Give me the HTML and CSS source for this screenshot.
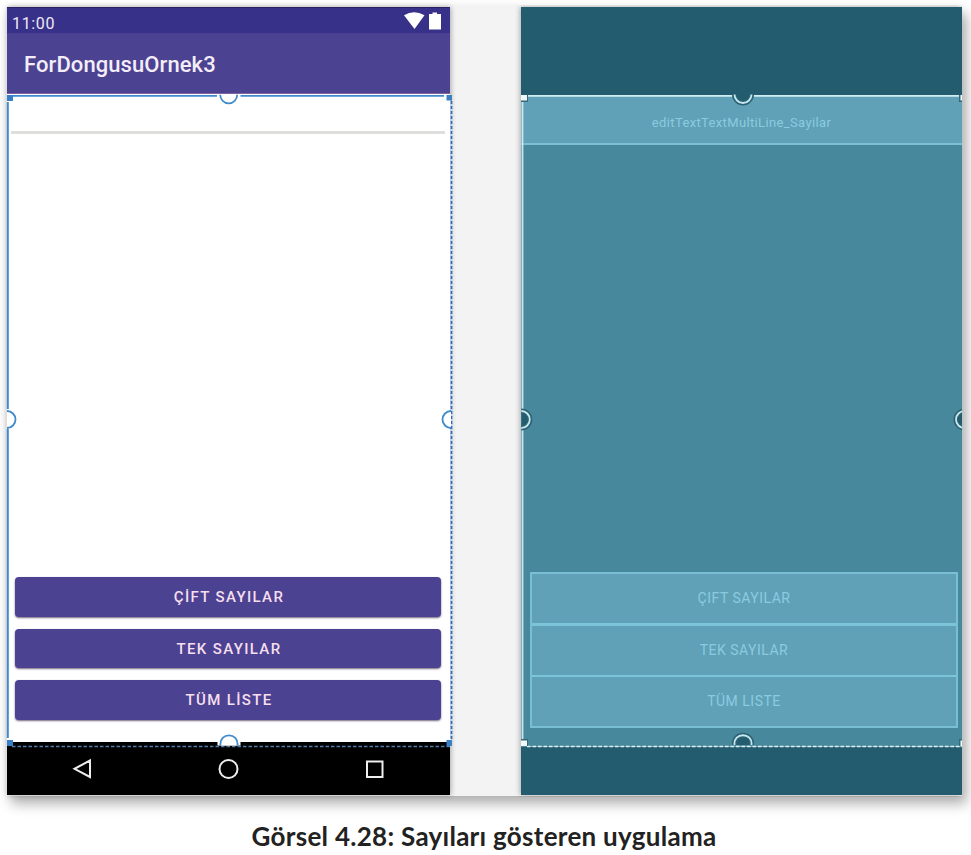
FILE: index.html
```
<!DOCTYPE html>
<html lang="tr">
<head>
<meta charset="utf-8">
<title>Görsel 4.28</title>
<link rel="stylesheet" href="styles.css">
</head>
<body>
<figure class="figure">
  <div class="editor">
    <section class="device design">
      <header class="status">
        <span class="clock">11:00</span>
        <svg class="status-icons" width="38" height="18" viewBox="0 0 38 18" fill="#fff"><path d="M0 3.200Q10 -2.800 20.500 3.200L10.500 17Z"/><path d="M28.500 .5h4.500v1.500h4V17.500h-12V2h3.500z"/></svg>
      </header>
      <div class="appbar">ForDongusuOrnek3</div>
      <main class="content">
        <div class="field"></div>
        <div class="buttons">
          <button class="btn">ÇİFT SAYILAR</button>
          <button class="btn">TEK SAYILAR</button>
          <button class="btn">TÜM LİSTE</button>
        </div>
      </main>
      <nav class="navbar">
        <svg width="443" height="53" fill="none" stroke="#eee" stroke-width="2"><path d="M83 18.500V35L67.500 26.800Z"/><circle cx="221.500" cy="27" r="9"/><path d="M360 19.500h15.500v15.500H360z"/></svg>
      </nav>
      <svg class="selection" width="446" height="656" fill="none" stroke="#3f8bcd" stroke-width="1.800">
        <path d="M5 1.800H210M233 1.800H437"/>
        <path d="M.8 8V315M.8 335V644" stroke-width="2"/>
        <path d="M444.500 7V646" stroke="#b8d8f3" stroke-width="2"/>
        <path d="M444.500 7V646" stroke="#4263ae" stroke-width="1.600" stroke-dasharray="3 2"/>
        <path d="M5 652.500H444" stroke="#527da8" stroke-width="1.400" stroke-dasharray="3.500 2"/>
        <g fill="#fff" stroke="none"><path d="M210.500 1h23v3h-23zM210.500 647h23v4.500h-23z"/></g>
        <path d="M213.200 .800A8.500 8.500 0 0 0 230.200 .800M213.500 651.500C212 638 232 638 230.500 651.500M0 317A8.500 8.500 0 0 1 0 334M444 317A8.500 8.500 0 0 0 444 334" fill="#fff"/>
        <path d="M0 648h8v-3H0zM436 648h8v-3h-8z" fill="#fff" stroke="none"/>
        <path d="M0 1h6v6H0zM439.500 1h5.500v5.500h-5.500zM0 646h6v6H0zM439.500 646h5.500v6h-5.500z" fill="#397fc5" stroke="none"/>
      </svg>
    </section>
    <section class="device blueprint">
      <div class="bp-top"></div>
      <main class="bp-content">
        <div class="bp-field">editTextTextMultiLine_Sayilar</div>
        <div class="bp-buttons">
          <div class="bp-btn">ÇIFT SAYILAR</div>
          <div class="bp-btn">TEK SAYILAR</div>
          <div class="bp-btn">TÜM LISTE</div>
        </div>
      </main>
      <div class="bp-bottom"></div>
      <svg class="selection" width="441" height="656" fill="none" stroke="#c7e8f0" stroke-width="1.800">
        <path d="M6 1.800H441" stroke="#d4edf2"/>
        <path d="M1.500 7V645"/>
        <g fill="#235c6f" stroke="#2b6374" stroke-width="5"><path d="M213.500 .5A8.500 8.500 0 0 0 230.500 .5M213.500 651C212 638 232 638 230.500 651M.3 317A8.500 8.500 0 0 1 .3 334M443.500 317A8.500 8.500 0 0 0 443.500 334"/></g>
        <path d="M213.500 .5A8.500 8.500 0 0 0 230.500 .5M213.500 651C212 638 232 638 230.500 651M.3 317A8.500 8.500 0 0 1 .3 334M443.500 317A8.500 8.500 0 0 0 443.500 334"/>
        <path d="M6 652.500H441" stroke="#7fabb6" stroke-width="1.200"/>
        <path d="M6 652.500H441" stroke="#e0f0f2" stroke-width="1.500" stroke-dasharray="3.500 2"/>
        <path d="M0 1h7v7H0zM438 1h3v7h-3zM0 645h7v7H0zM438 645h3v7h-3z" fill="#35687b" stroke="none"/>
        <path d="M0 1h6v5.500H0zM439.500 1h1.500v5.500h-1.500zM0 646.500h6v5.500H0zM439.500 646.500h1.500v5.500h-1.500z" fill="#f0f8fa" stroke="none"/>
      </svg>
    </section>
  </div>
  <figcaption class="caption">Görsel 4.28: Sayıları gösteren uygulama</figcaption>
</figure>
</body>
</html>
```
FILE: styles.css
```
* { box-sizing: border-box; }
body { margin: 0; background: #fff; overflow: hidden; }
.figure { margin: 0; padding: 6px 9px 0 6px; height: 855px; }
.editor {
  display: flex;
  justify-content: space-between;
  width: 956px;
  height: 790px;
  padding: 1px 0 1px 1px;
  background: #f3f3f3;
  box-shadow: 5px 8px 12px rgba(0, 0, 0, .3), 0 0 9px rgba(0, 0, 0, .05);
}
.device { position: relative; display: flex; flex-direction: column; height: 788px; }
.selection { position: absolute; left: 0; top: 87px; overflow: visible; }

.design { width: 443px; font-family: Roboto, sans-serif; box-shadow: 1px 0 5px rgba(0, 0, 0, .3); }
.status {
  display: flex;
  justify-content: space-between;
  height: 26px;
  padding: 4px 8px 0 5px;
  background: #38318a;
  border-top: 1px solid #292265;
  color: #eee8f4;
}
.clock { font-size: 16px; line-height: 23px; letter-spacing: .65px; }
.status-icons { display: block; }
.appbar {
  height: 61px;
  padding-left: 17px;
  background: #4b4292;
  border-bottom: 1px solid #80629f;
  color: #f4edf7;
  font-size: 22px;
  font-weight: 500;
  line-height: 63px;
  letter-spacing: .08px;
}
.content {
  display: flex;
  flex-direction: column;
  justify-content: space-between;
  height: 648px;
  padding: 0 9px 22px 8px;
  background: #fff;
}
.field { height: 40px; margin: 0 -4px; border-bottom: 3px solid #dededc; }
.buttons { display: flex; flex-direction: column; gap: 12px; }
.btn {
  height: 39.600px;
  padding: 0 0 0 2px;
  border: 0;
  border-radius: 4px;
  background: #4b4292;
  color: #f6dfed;
  font: 500 15px/41px Roboto, sans-serif;
  letter-spacing: 1.350px;
  box-shadow: 0 1px 2px rgba(45, 20, 60, .65);
}
.navbar { height: 53px; background: #000; }
.navbar svg { display: block; }

.blueprint {
  width: 441px;
  background: #235c6f;
  color: #8bcbdf;
  font-family: Roboto, sans-serif;
  clip-path: inset(-2px 0 -2px -8px);
  box-shadow: -1px 0 5px rgba(0, 0, 0, .3);
}
.bp-top { height: 88px; }
.bp-content {
  display: flex;
  flex-direction: column;
  justify-content: space-between;
  height: 652px;
  padding: 0 4px 19px 9px;
  background: #48889c;
}
.bp-field {
  height: 50px;
  margin: 0 -4px 0 -9px;
  border-bottom: 2px solid #7abfd2;
  background: #60a1b8;
  text-align: center;
  font-size: 13px;
  line-height: 56px;
  letter-spacing: .36px;
}
.bp-buttons { border: 2px solid #78bfd3; background: #60a1b8; }
.bp-btn { height: 49px; font-size: 14px; line-height: 48px; letter-spacing: .5px; text-align: center; }
.bp-btn + .bp-btn { height: 51px; border-top: 2px solid #7cc4d9; }
.bp-btn:nth-child(2) { height: 52px; border-top-width: 3px; }

.caption {
  margin-top: 24px;
  text-align: center;
  color: #222;
  font: 700 26px/32px Lato, sans-serif;
  letter-spacing: .28px;
  white-space: nowrap;
}
```
